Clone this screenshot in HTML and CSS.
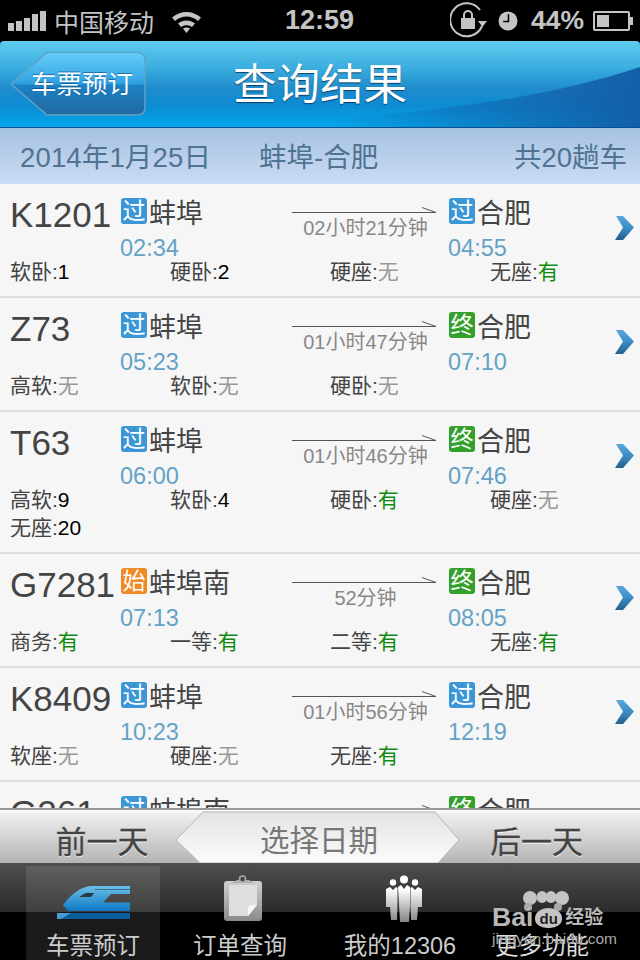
FILE: index.html
```html
<!DOCTYPE html>
<html lang="en">
<head>
    <meta charset="UTF-8">
    <meta name="viewport" content="width=device-width, initial-scale=1.0">
    <title>查询结果</title>
    <link rel="stylesheet" href="styles.css">
</head>
<body>
    <svg class="defs" width="0" height="0">
        <defs>
            <linearGradient id="chev" x1="0" y1="0" x2="0" y2="1">
                <stop offset="0" stop-color="#5aa6dc"/>
                <stop offset="0.5" stop-color="#3b8cc6"/>
                <stop offset="1" stop-color="#235f8c"/>
            </linearGradient>
            <symbol id="chevron" viewBox="0 0 20 24">
                <path d="M1 0H8L19 11.5L8 24H0L8 11.5Z" fill="url(#chev)"/>
            </symbol>
            <symbol id="arrow" viewBox="0 0 144 8">
                <path d="M0 7.5H144M130 2.5L144 7.5" fill="none" stroke="#555" stroke-width="1"/>
            </symbol>
        </defs>
    </svg>

    <div class="status">
        <div class="signal"><i></i><i></i><i></i><i></i><i></i></div>
        <span class="carrier">中国移动</span>
        <svg class="wifi" width="31" height="24" viewBox="0 0 31 24">
            <path d="M1 8.5C9 1 22 1 30 8.5L27 12C20.500 6 10.500 6 4 12Z M7 14.500C12 10.500 19 10.500 24 14.500L21 18C17.500 15.500 13.500 15.500 10 18Z M12 19.500C14 18 17 18 19 19.500L15.500 24Z" fill="#c4c4c4"/>
        </svg>
        <span class="clock">12:59</span>
        <svg class="lock" width="38" height="38" viewBox="0 0 38 38">
            <path d="M32 24A16.500 16.500 0 1 1 30 8" fill="none" stroke="#c4c4c4" stroke-width="2"/>
            <path d="M28 19H37L32.500 25Z" fill="#c4c4c4"/>
            <path d="M11 16H25V27H11Z" fill="#c4c4c4"/>
            <path d="M14 16V13A4 4 0 0 1 22 13V16" fill="none" stroke="#c4c4c4" stroke-width="2"/>
        </svg>
        <svg class="alarm" width="20" height="20" viewBox="0 0 21 21">
            <circle cx="10.500" cy="10.500" r="10" fill="#c4c4c4"/>
            <path d="M11 3.500V11H5.500" fill="none" stroke="#000" stroke-width="1.600"/>
        </svg>
        <span class="percent">44%</span>
        <div class="battery"><div class="battery-fill"></div></div>
        <div class="battery-tip"></div>
    </div>

    <div class="nav">
        <svg class="nav-bg" width="640" height="87" viewBox="0 0 640 87">
            <defs>
                <linearGradient id="swoosh" x1="0" y1="0" x2="1" y2="0">
                    <stop offset="0.3" stop-color="#125fa8" stop-opacity="0"/>
                    <stop offset="1" stop-color="#125fa8" stop-opacity="1"/>
                </linearGradient>
                <linearGradient id="back" x1="0" y1="0" x2="0" y2="1">
                    <stop offset="0" stop-color="#66d0fa"/>
                    <stop offset="0.5" stop-color="#2f9fe0"/>
                    <stop offset="0.52" stop-color="#1b82c6"/>
                    <stop offset="1" stop-color="#22699f"/>
                </linearGradient>
            </defs>
            <path d="M640 26C520 66 380 76 200 87H640Z" fill="url(#swoosh)"/>
            <path d="M47 11.500H137Q145 11.500 145 19.500V66Q145 74 137 74H47L11 43Z" fill="url(#back)" stroke="#5fa3c8" stroke-width="1.500"/>
        </svg>
        <a class="back">车票预订</a>
        <h1 class="title">查询结果</h1>
    </div>

    <div class="summary">
        <span class="date">2014年1月25日</span>
        <span class="route">蚌埠-合肥</span>
        <span class="count">共20趟车</span>
    </div>

    <div class="list">
        <div class="row">
            <div class="top">
                <div class="no">K1201</div>
                <div class="stop dep">
                    <div class="name"><span class="badge pass">过</span>蚌埠</div>
                    <div class="time">02:34</div>
                </div>
                <div class="dur">
                    <svg class="arrow"><use href="#arrow"/></svg>
                    <div class="dur-text">02小时21分钟</div>
                </div>
                <div class="stop arr">
                    <div class="name"><span class="badge pass">过</span>合肥</div>
                    <div class="time">04:55</div>
                </div>
                <svg class="chevron"><use href="#chevron"/></svg>
            </div>
            <div class="seats">
                <div>软卧:<span class="num">1</span></div>
                <div>硬卧:<span class="num">2</span></div>
                <div>硬座:<span class="none">无</span></div>
                <div>无座:<span class="yes">有</span></div>
            </div>
        </div>

        <div class="row">
            <div class="top">
                <div class="no">Z73</div>
                <div class="stop dep">
                    <div class="name"><span class="badge pass">过</span>蚌埠</div>
                    <div class="time">05:23</div>
                </div>
                <div class="dur">
                    <svg class="arrow"><use href="#arrow"/></svg>
                    <div class="dur-text">01小时47分钟</div>
                </div>
                <div class="stop arr">
                    <div class="name"><span class="badge end">终</span>合肥</div>
                    <div class="time">07:10</div>
                </div>
                <svg class="chevron"><use href="#chevron"/></svg>
            </div>
            <div class="seats">
                <div>高软:<span class="none">无</span></div>
                <div>软卧:<span class="none">无</span></div>
                <div>硬卧:<span class="none">无</span></div>
            </div>
        </div>

        <div class="row">
            <div class="top">
                <div class="no">T63</div>
                <div class="stop dep">
                    <div class="name"><span class="badge pass">过</span>蚌埠</div>
                    <div class="time">06:00</div>
                </div>
                <div class="dur">
                    <svg class="arrow"><use href="#arrow"/></svg>
                    <div class="dur-text">01小时46分钟</div>
                </div>
                <div class="stop arr">
                    <div class="name"><span class="badge end">终</span>合肥</div>
                    <div class="time">07:46</div>
                </div>
                <svg class="chevron"><use href="#chevron"/></svg>
            </div>
            <div class="seats">
                <div>高软:<span class="num">9</span></div>
                <div>软卧:<span class="num">4</span></div>
                <div>硬卧:<span class="yes">有</span></div>
                <div>硬座:<span class="none">无</span></div>
                <div>无座:<span class="num">20</span></div>
            </div>
        </div>

        <div class="row">
            <div class="top">
                <div class="no">G7281</div>
                <div class="stop dep">
                    <div class="name"><span class="badge start">始</span>蚌埠南</div>
                    <div class="time">07:13</div>
                </div>
                <div class="dur">
                    <svg class="arrow"><use href="#arrow"/></svg>
                    <div class="dur-text">52分钟</div>
                </div>
                <div class="stop arr">
                    <div class="name"><span class="badge end">终</span>合肥</div>
                    <div class="time">08:05</div>
                </div>
                <svg class="chevron"><use href="#chevron"/></svg>
            </div>
            <div class="seats">
                <div>商务:<span class="yes">有</span></div>
                <div>一等:<span class="yes">有</span></div>
                <div>二等:<span class="yes">有</span></div>
                <div>无座:<span class="yes">有</span></div>
            </div>
        </div>

        <div class="row">
            <div class="top">
                <div class="no">K8409</div>
                <div class="stop dep">
                    <div class="name"><span class="badge pass">过</span>蚌埠</div>
                    <div class="time">10:23</div>
                </div>
                <div class="dur">
                    <svg class="arrow"><use href="#arrow"/></svg>
                    <div class="dur-text">01小时56分钟</div>
                </div>
                <div class="stop arr">
                    <div class="name"><span class="badge pass">过</span>合肥</div>
                    <div class="time">12:19</div>
                </div>
                <svg class="chevron"><use href="#chevron"/></svg>
            </div>
            <div class="seats">
                <div>软座:<span class="none">无</span></div>
                <div>硬座:<span class="none">无</span></div>
                <div>无座:<span class="yes">有</span></div>
            </div>
        </div>

        <div class="row">
            <div class="top">
                <div class="no">G261</div>
                <div class="stop dep">
                    <div class="name"><span class="badge pass">过</span>蚌埠南</div>
                    <div class="time">11:02</div>
                </div>
                <div class="dur">
                    <svg class="arrow"><use href="#arrow"/></svg>
                    <div class="dur-text">52分钟</div>
                </div>
                <div class="stop arr">
                    <div class="name"><span class="badge end">终</span>合肥</div>
                    <div class="time">11:54</div>
                </div>
                <svg class="chevron"><use href="#chevron"/></svg>
            </div>
        </div>
    </div>

    <div class="daybar">
        <div class="day prev">前一天</div>
        <div class="pick">
            <svg class="pick-bg" width="288" height="55" viewBox="0 0 288 55">
                <defs>
                    <linearGradient id="pickfill" x1="0" y1="0" x2="0" y2="1">
                        <stop offset="0" stop-color="#e4e4e4"/>
                        <stop offset="1" stop-color="#fbfbfb"/>
                    </linearGradient>
                </defs>
                <path d="M28 4H260L284 32L263 55H25L1 32Z" fill="url(#pickfill)" stroke="#b5b5b5" stroke-width="1"/>
            </svg>
            <span class="pick-text">选择日期</span>
        </div>
        <div class="day next">后一天</div>
    </div>

    <div class="tabbar">
        <div class="tab active">
            <svg class="tab-icon icon-train" width="73" height="34" viewBox="0 0 73 34">
                <defs>
                    <linearGradient id="train" x1="0" y1="0" x2="0" y2="1">
                        <stop offset="0" stop-color="#6cc0e8"/>
                        <stop offset="1" stop-color="#0c78c4"/>
                    </linearGradient>
                </defs>
                <path d="M6 20C14 9 24 1 36 1H73V9H54L46 17.500H73V26H11Z" fill="url(#train)"/>
                <path d="M38 4.500H73" stroke="#3b6f8e" stroke-width="1"/>
                <path d="M22 12L29 8H37L34 12Z" fill="#2a3a44"/>
                <path d="M0 28H73V34H0Z" fill="#0a5e9e"/>
                <path d="M0 28H14L4 34H0Z" fill="#4a9ad0"/>
            </svg>
            <span>车票预订</span>
        </div>
        <div class="tab">
            <svg class="tab-icon icon-board" width="38" height="47" viewBox="0 0 38 47">
                <defs>
                    <linearGradient id="board" x1="0" y1="0" x2="0" y2="1">
                        <stop offset="0" stop-color="#d0d0d0"/>
                        <stop offset="1" stop-color="#8a8a8a"/>
                    </linearGradient>
                </defs>
                <path d="M3 6H35Q38 6 38 9V43Q38 46 35 46H3Q0 46 0 43V9Q0 6 3 6Z" fill="url(#board)"/>
                <path d="M8 8L13 5H25L30 8Z" fill="#b0b0b0"/>
                <circle cx="18.500" cy="4" r="3" fill="#444" stroke="#aaa" stroke-width="1.500"/>
                <path d="M5 10H33V30L24 41H5Z" fill="#dedede"/>
                <path d="M33 30L24 41V33Q24 30 27 30Z" fill="#f6f6f6"/>
            </svg>
            <span>订单查询</span>
        </div>
        <div class="tab">
            <svg class="tab-icon icon-people" width="37" height="48" viewBox="0 0 37 48">
                <defs>
                    <linearGradient id="people" x1="0" y1="0" x2="0" y2="48" gradientUnits="userSpaceOnUse">
                        <stop offset="0.3" stop-color="#ffffff"/>
                        <stop offset="1" stop-color="#808080"/>
                    </linearGradient>
                </defs>
                <g fill="url(#people)">
                    <circle cx="18" cy="4.500" r="4"/>
                    <circle cx="7" cy="7.500" r="3.200"/>
                    <circle cx="29" cy="7.500" r="3.200"/>
                    <path d="M0 14L4 12L7 15L10 12L11.500 13V32L11 45H5L4 32H0Z"/>
                    <path d="M12 12L15 10L18 14L21 10L24 12V30L23 47H14L13 30Z"/>
                    <path d="M36 14L32 12L29 15L26 12L24.500 13V32L25 45H31L32 32H36Z"/>
                </g>
            </svg>
            <span>我的12306</span>
        </div>
        <div class="tab last">
            <span>更多功能</span>
        </div>
    </div>

    <div class="mark">
        <svg class="paw" width="48" height="24" viewBox="0 0 48 24">
            <g fill="#c4c4c4">
                <circle cx="8" cy="7" r="7"/>
                <circle cx="40" cy="7" r="7"/>
                <ellipse cx="20" cy="6" rx="5.500" ry="6"/>
                <ellipse cx="29" cy="6" rx="5.500" ry="6"/>
            </g>
            <circle cx="6" cy="16" r="4" fill="#aaa"/>
            <circle cx="36" cy="16" r="4" fill="#aaa"/>
        </svg>
        <div class="mark-line">
            <span>Bai</span><span class="mark-du">du</span><span class="mark-cn">经验</span>
        </div>
        <div class="mark-url">jingyan.baidu.com</div>
    </div>
</body>
</html>
```

FILE: styles.css
```css
html, body {
    margin: 0;
    padding: 0;
}

body {
    position: relative;
    width: 640px;
    height: 960px;
    overflow: hidden;
    background: #000;
    font-family: "Liberation Sans", "Noto Sans CJK SC", sans-serif;
}

.defs {
    position: absolute;
}

/* status bar */
.status {
    height: 41px;
    display: flex;
    align-items: center;
    color: #c4c4c4;
    background: #000;
}

.signal {
    display: flex;
    align-items: flex-end;
    gap: 2px;
    margin-left: 8px;
    height: 20px;
}

.signal i {
    width: 6px;
    background: #c4c4c4;
}

.signal i:nth-child(1) { height: 8px; }
.signal i:nth-child(2) { height: 10px; }
.signal i:nth-child(3) { height: 13px; }
.signal i:nth-child(4) { height: 17px; }
.signal i:nth-child(5) { height: 20px; }

.carrier {
    margin-left: 8px;
    font-size: 25px;
    width: 101px;
    white-space: nowrap;
}

.wifi {
    margin-left: 16px;
}

.clock {
    margin-left: 83px;
    width: 71px;
    font-size: 27px;
    font-weight: bold;
}

.lock {
    margin-left: 94px;
}

.alarm {
    margin-left: 10px;
}

.percent {
    margin-left: 13px;
    width: 53px;
    font-size: 26.500px;
    font-weight: bold;
}

.battery {
    margin-left: 9px;
    width: 37px;
    height: 20px;
    padding: 2px;
    border: 2px solid #c4c4c4;
    border-radius: 2px;
    box-sizing: border-box;
}

.battery-fill {
    width: 12px;
    height: 12px;
    background: #c4c4c4;
}

.battery-tip {
    width: 3px;
    height: 8px;
    background: #c4c4c4;
}

/* header */
.nav {
    position: relative;
    height: 87px;
    display: flex;
    align-items: center;
    justify-content: center;
    box-sizing: border-box;
    border-bottom: 1px solid #0a4f94;
    border-radius: 4px 4px 0 0;
    overflow: hidden;
    background: linear-gradient(#60cbee 0%, #3cafe0 30%, #1f8ccc 55%, #0d8bd3 75%, #03a7ea 100%);
}

.nav-bg {
    position: absolute;
    left: 0;
    top: 0;
}

.back {
    position: absolute;
    left: 31px;
    top: 28px;
    font-size: 25.500px;
    line-height: 30px;
    color: #fff;
    text-shadow: 0 -1px 0 rgba(0, 50, 90, 0.5);
}

.title {
    position: relative;
    margin: 1px 0 0;
    font-size: 43.500px;
    font-weight: normal;
    line-height: 60px;
    color: #fff;
    text-shadow: 0 1px 1px rgba(0, 40, 80, 0.8);
}

/* date + route strip */
.summary {
    height: 53px;
    display: flex;
    align-items: center;
    padding: 0 13px 3px 20px;
    font-size: 27.500px;
    color: #4f7390;
    background: linear-gradient(#a6c2de, #cbdbf5);
}

.date {
    width: 239px;
    letter-spacing: 0.150px;
}

.count {
    margin-left: auto;
}

/* result list */
.list {
    height: 624px;
    overflow: hidden;
    background: #f6f6f6;
}

.row {
    padding: 10px 0;
    border-bottom: 2px solid #ddd;
}

.top {
    display: flex;
    height: 64px;
}

.no {
    width: 111px;
    padding-left: 10px;
    font-size: 35px;
    line-height: 42px;
    color: #444;
}

.stop {
    padding-top: 2px;
}

.dep {
    width: 171px;
}

.arr {
    width: 166px;
}

.name {
    display: flex;
    align-items: center;
    height: 30px;
    font-size: 27px;
    color: #444;
}

.badge {
    width: 26px;
    height: 26px;
    margin-right: 2px;
    border-radius: 3px;
    font-size: 23px;
    line-height: 26px;
    text-align: center;
    color: #fff;
}

.pass { background: #3a96d6; }
.end { background: #33a02c; }
.start { background: #f08a24; }

.time {
    margin: 8px 0 0 -1px;
    font-size: 23.500px;
    line-height: 28px;
    color: #64a2c6;
}

.dur {
    width: 144px;
    margin-right: 13px;
    padding-top: 11px;
    text-align: center;
}

.arrow {
    display: block;
    width: 144px;
    height: 8px;
}

.dur-text {
    margin-left: 3px;
    font-size: 20px;
    line-height: 30px;
    color: #888;
}

.chevron {
    width: 20px;
    height: 24px;
    margin-top: 22px;
}

.seats {
    display: grid;
    grid-template-columns: repeat(4, 160px);
    padding-left: 10px;
    font-size: 21px;
    line-height: 28px;
    color: #444;
}

.num { color: #000; }
.none { color: #999; }
.yes { color: #118a11; }

/* prev / next day */
.daybar {
    position: relative;
    height: 55px;
    display: flex;
    align-items: center;
    box-sizing: border-box;
    border-top: 2px solid #9a9a9a;
    background: linear-gradient(#fdfdfd 0, #efefef 4px, #b4b4b4 100%);
}

.day {
    box-sizing: border-box;
    padding-top: 5px;
    font-size: 31px;
    text-align: center;
    color: #444;
    text-shadow: 0 1px 0 #fff;
    -webkit-text-stroke: 0.300px #444;
}

.prev {
    width: 175px;
    padding-left: 29px;
}

.next {
    width: 177px;
    padding-right: 30px;
}

.pick {
    position: relative;
    width: 288px;
    height: 53px;
    display: flex;
    align-items: center;
    justify-content: center;
}

.pick-bg {
    position: absolute;
    left: 0;
    top: -2px;
}

.pick-text {
    position: relative;
    padding-top: 3px;
    font-size: 29.500px;
    color: #777;
}

/* bottom tabs */
.tabbar {
    display: flex;
    height: 97px;
    background: linear-gradient(#4f4f4f 0, #2a2a2a 49px, #000 49px);
}

.tab {
    width: 160px;
    display: flex;
    flex-direction: column;
    align-items: center;
    font-size: 23.500px;
    line-height: 27px;
    color: #ccc;
}

.tab span {
    margin-top: auto;
}

.tab.active {
    width: 134px;
    margin: 3px 0 0 26px;
    background: rgba(255, 255, 255, 0.1);
}

.tab.last {
    width: 124px;
    color: #ddd;
}

.icon-train {
    margin-top: 19px;
}

.icon-board {
    margin: 12px 0 0 6px;
}

.icon-people {
    margin: 12px 0 0 9px;
}

/* watermark over the tabs */
.mark {
    position: absolute;
    left: 492px;
    top: 891px;
    width: 114px;
    color: #b8b8b8;
}

.paw {
    display: block;
    margin-left: 30px;
}

.mark-line {
    display: flex;
    align-items: center;
    margin-top: -8px;
    font-size: 26.500px;
    font-weight: bold;
    line-height: 21px;
}

.mark-du {
    width: 27px;
    height: 20px;
    margin: 0 3px 0 2px;
    border-radius: 50% 50% 45% 45%;
    background: #c4c4c4;
    font-size: 15px;
    line-height: 21px;
    text-align: center;
    color: #222;
}

.mark-cn {
    font-size: 19px;
}

.mark-url {
    margin-top: 3px;
    font-size: 15.500px;
    line-height: 16px;
    white-space: nowrap;
    color: #a8a8a8;
}
```
